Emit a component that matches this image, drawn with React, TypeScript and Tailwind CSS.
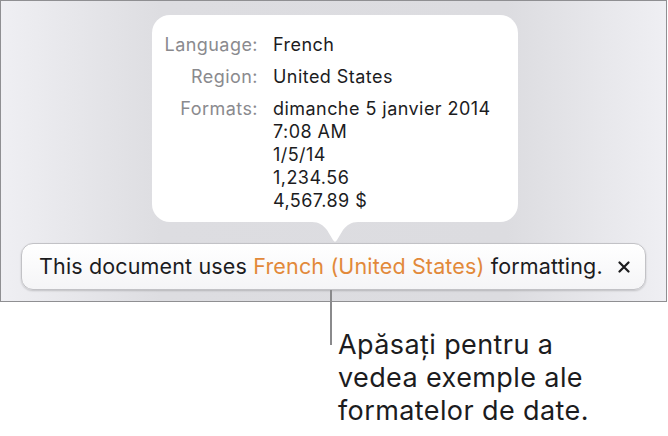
import React from 'react';

const formats = ['dimanche 5 janvier 2014', '7:08 AM', '1/5/14', '1,234.56', '4,567.89 $'];

const Row: React.FC<{ label: string; children: React.ReactNode }> = ({ label, children }) => (
  <>
    <div className="w-[106px] text-right text-[#8a8a8e]">{label}</div>
    <div className="text-[#1c1c1e]">{children}</div>
  </>
);

export default function App() {
  return (
    <div className="relative w-[668px] h-[436px] bg-white font-['Inter',sans-serif]">
      {/* screen area */}
      <div className="flex flex-col w-[667px] h-[302px] border border-[#8f8f92] bg-[linear-gradient(to_right,#efeff3,#dddde1_24%,#dcdce0_76%,#efeff3)]">
        <div className="ml-[151px] mt-[14px] w-[366px] h-[207px] rounded-[18px] bg-white pt-[18px]">
          <div className="grid grid-cols-[auto_1fr] gap-x-[15px] gap-y-[9px] text-[18px] leading-[23px] tracking-[0.45px]">
            <Row label="Language:">French</Row>
            <Row label="Region:">United States</Row>
            <Row label="Formats:">
              {formats.map(f => (
                <div key={f}>{f}</div>
              ))}
            </Row>
          </div>
        </div>
        <svg className="ml-[311px] block" width="46" height="21" viewBox="0 0 46 21">
          <path d="M0 0 C7 0 11 3 15 8 L21 18 Q23 21.5 25 18 L31 8 C35 3 39 0 46 0 Z" fill="#ffffff" />
        </svg>
        <div className="ml-[20px] w-[625px] h-[47px] flex items-center pl-[17px] pr-[15px] rounded-[12px] border border-[#c2c2c6] bg-[linear-gradient(to_bottom,#ffffff,#f5f5f7)] shadow-[0_1px_2px_rgba(0,0,0,0.18)]">
          <div className="flex-1 text-[21.5px] text-[#1c1c1e] tracking-[0.15px]">
            This document uses <span className="text-[#e2893a]">French (United States)</span> formatting.
          </div>
          <svg width="12" height="12" viewBox="0 0 12 12">
            <path d="M1.5 1.5 L10.5 10.5 M10.5 1.5 L1.5 10.5" stroke="#1c1c1e" strokeWidth="2.2" strokeLinecap="round" />
          </svg>
        </div>
      </div>

      {/* callout leader */}
      <div className="absolute left-[330px] top-[290px] w-[2px] h-[55px] bg-[#8a8a8c]" />

      <div className="ml-[338px] mt-[26px] text-[27px] leading-[33px] tracking-[0.4px] text-[#1c1c1e]">
        <div>Apăsați pentru a</div>
        <div>vedea exemple ale</div>
        <div>formatelor de date.</div>
      </div>
    </div>
  );
}
